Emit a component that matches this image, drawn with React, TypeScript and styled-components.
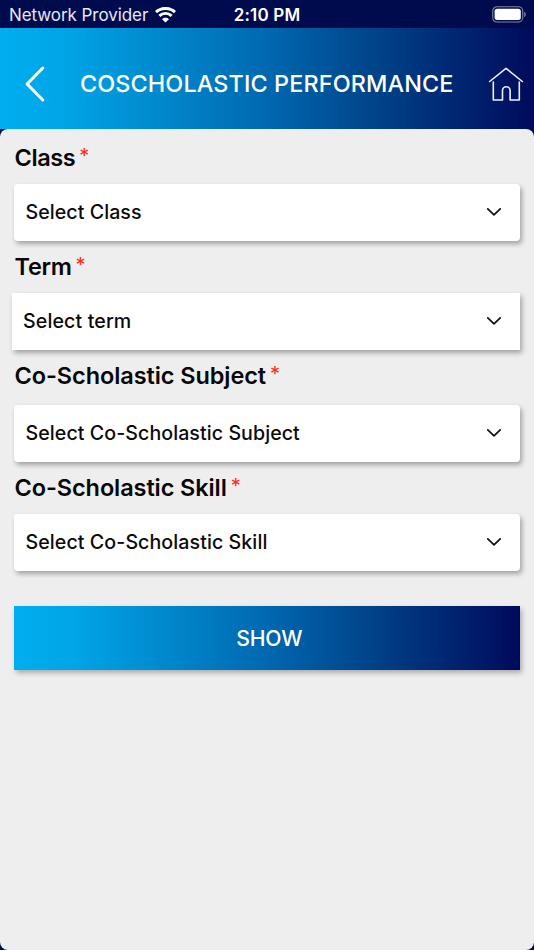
import React from "react";
import styled, { createGlobalStyle } from "styled-components";

const brandGradient = "linear-gradient(90deg, #00aeef 0%, #00a5e6 12%, #0068b0 50%, #004288 71%, #000a5c 100%)";

const GlobalStyle = createGlobalStyle`
  * { box-sizing: border-box; }
  body { margin: 0; background: #000b4d; }
`;

const Screen = styled.div`
  display: flex;
  flex-direction: column;
  width: 534px;
  height: 950px;
  overflow: hidden;
  background: #000b4d;
  color: #080808;
  font-family: Inter, "Liberation Sans", sans-serif;
`;

const StatusBar = styled.div`
  display: grid;
  grid-template-columns: 1fr auto 1fr;
  align-items: center;
  flex: none;
  height: 28px;
  padding: 1px 9px 0 9px;
  color: #fff;
`;

const Carrier = styled.div`
  display: flex;
  align-items: center;
  gap: 7px;
  color: #e5e8f5;
  font-size: 17px;
  line-height: 20px;
  letter-spacing: -0.07px;
  white-space: nowrap;
`;

const Clock = styled.div`
  font-size: 17px;
  font-weight: 600;
  line-height: 20px;
  letter-spacing: 0.2px;
`;

const BatteryIcon = styled.svg`
  justify-self: end;
  margin-right: -1px;
`;

const Header = styled.header`
  display: flex;
  align-items: center;
  flex: none;
  height: 100.5px;
  padding: 11px 10px 0 24px;
  background: ${brandGradient};
  color: #fff;
`;

const Title = styled.h1`
  flex: 1;
  margin: 0 0 0 34px;
  font-size: 23.4px;
  font-weight: 500;
  line-height: 30px;
  letter-spacing: 0.12px;
  white-space: nowrap;
`;

const Form = styled.main`
  display: flex;
  flex-direction: column;
  flex: 1;
  padding: 3px 14.5px 0 14px;
  border-radius: 8px;
  background: #eee;
`;

const Label = styled.label<{ $gap?: number; $spacing: number }>`
  display: flex;
  align-items: center;
  height: 52px;
  margin-bottom: ${({ $gap = 0 }) => $gap}px;
  padding-left: 0.5px;
  font-size: 23.5px;
  font-weight: 560;
  letter-spacing: ${({ $spacing }) => $spacing}px;
  white-space: nowrap;
`;

const Required = styled.span`
  margin: 0 0 0 4px;
  padding-bottom: 3px;
  color: #ff2a12;
  font-size: 20px;
  font-weight: 400;
  letter-spacing: 0;
`;

const Select = styled.button<{ $square?: boolean; $spacing: number }>`
  display: flex;
  align-items: center;
  justify-content: space-between;
  height: 57px;
  margin: 0 0 0 ${({ $square }) => ($square ? "-2.5px" : "0")};
  padding: 0 18.5px 0 11.5px;
  border: 0;
  border-radius: ${({ $square }) => ($square ? 0 : 4)}px;
  background: #fff;
  box-shadow: 2px 3px 5px rgba(0, 0, 0, 0.32);
  color: #0b0b0b;
  font: 500 19.6px/24px Inter, "Liberation Sans", sans-serif;
  letter-spacing: ${({ $spacing }) => $spacing}px;
  white-space: nowrap;
`;

const ShowButton = styled.button`
  height: 64px;
  margin: 35px 0 0;
  padding: 0 0 0 5px;
  border: 0;
  background: ${brandGradient};
  box-shadow: 2px 3px 5px rgba(0, 0, 0, 0.28);
  color: #fff;
  font: 500 21.2px/26px Inter, "Liberation Sans", sans-serif;
  letter-spacing: -0.2px;
`;

const fields = [
  { label: "Class", value: "Select Class", gap: 0, labelSpacing: -0.4, valueSpacing: 0.06, square: false },
  { label: "Term", value: "Select term", gap: 0, labelSpacing: -0.3, valueSpacing: 0.12, square: true },
  { label: "Co-Scholastic Subject", value: "Select Co-Scholastic Subject", gap: 3, labelSpacing: -0.08, valueSpacing: 0.07, square: false },
  { label: "Co-Scholastic Skill", value: "Select Co-Scholastic Skill", gap: 0, labelSpacing: -0.09, valueSpacing: 0.08, square: false },
];

const Chevron = () => (
  <svg width="14" height="8" viewBox="0 0 14 8" fill="none">
    <path d="M.8.8 7 6.8 13.2.8" stroke="#111" strokeWidth="1.7" strokeLinecap="round" strokeLinejoin="round" />
  </svg>
);

export default function App() {
  return (
    <>
      <GlobalStyle />
      <Screen>
        <StatusBar>
          <Carrier>
            <span>Network Provider</span>
            <svg width="21" height="16" viewBox="0 0 21 16" fill="none" stroke="#fff" strokeWidth="2.9">
              <path d="M1 5.1C6.4.2 14.6.2 20 5.1M4.4 8.9c3.5-3.3 8.7-3.3 12.2 0" />
              <path d="M7.1 12.2c1.9-1.9 4.9-1.9 6.8 0l-3.4 3.3Z" fill="#fff" stroke="none" />
            </svg>
          </Carrier>
          <Clock>2:10 PM</Clock>
          <BatteryIcon width="34" height="17" viewBox="0 0 34 17" fill="none">
            <rect x=".75" y=".75" width="30" height="15.3" rx="4.3" stroke="#7f84a5" strokeWidth="1.1" />
            <rect x="2.6" y="2.7" width="26.2" height="11.4" rx="2.5" fill="#fff" />
            <path d="M32.2 5.8c2 1 2 4.2 0 5.2Z" fill="#7f84a5" />
          </BatteryIcon>
        </StatusBar>
        <Header>
          <svg width="22" height="36" viewBox="0 0 22 36" fill="none">
            <path d="M18.8 2 3.1 18l15.7 16" stroke="#fff" strokeWidth="3" strokeLinecap="round" strokeLinejoin="round" />
          </svg>
          <Title>COSCHOLASTIC PERFORMANCE</Title>
          <svg width="36" height="36" viewBox="0 0 36 36" fill="none" stroke="#eef0ff" strokeWidth="1.6" strokeLinecap="round" strokeLinejoin="round">
            <path d="M1.7 15.5 18 2.3l16.3 13.2" />
            <path d="M5.3 16v18h9.2V24.5a3.8 3.8 0 0 1 7.6 0V34h9.2V16" />
          </svg>
        </Header>
        <Form>
          {fields.map((field) => (
            <React.Fragment key={field.label}>
              <Label $gap={field.gap} $spacing={field.labelSpacing}>
                {field.label}
                <Required>*</Required>
              </Label>
              <Select type="button" $square={field.square} $spacing={field.valueSpacing}>
                {field.value}
                <Chevron />
              </Select>
            </React.Fragment>
          ))}
          <ShowButton type="button">SHOW</ShowButton>
        </Form>
      </Screen>
    </>
  );
}
